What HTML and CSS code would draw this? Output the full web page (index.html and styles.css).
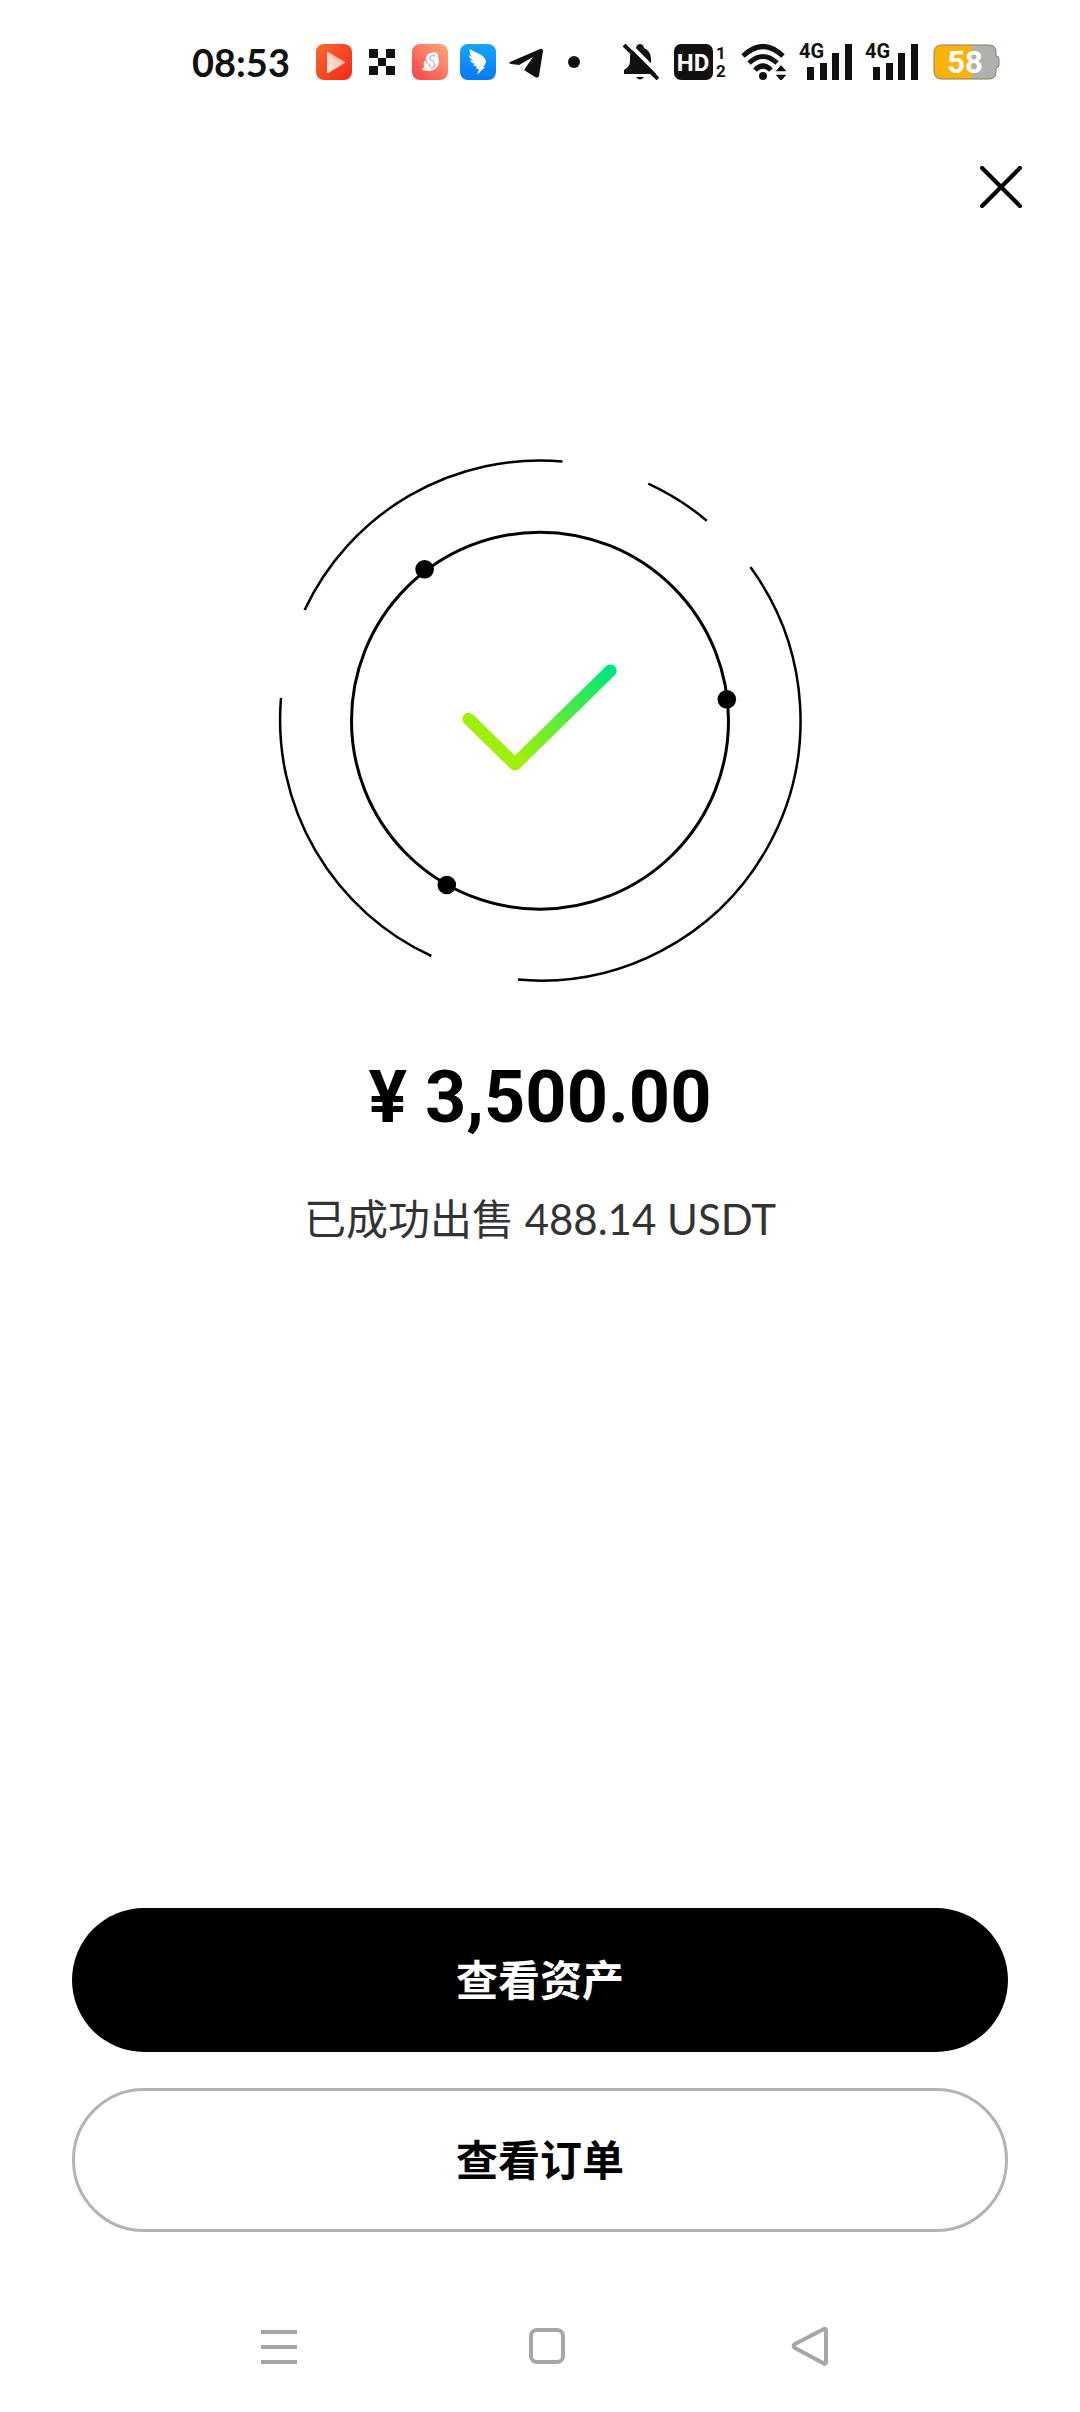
FILE: index.html
```html
<!DOCTYPE html>
<html lang="zh-CN">
<head>
<meta charset="utf-8">
<meta name="viewport" content="width=device-width, initial-scale=1">
<title>出售成功</title>
<link rel="stylesheet" href="styles.css">
</head>
<body>
<div class="screen">
  <div class="status-bar">
    <div class="status-left">
      <time class="clock">08:53</time>
      <svg class="app-icon" viewBox="0 0 36 36" aria-hidden="true">
        <defs>
          <linearGradient id="play-bg" x1="0" y1="0" x2="1" y2="1"><stop offset="0" stop-color="#f96a33"/><stop offset="1" stop-color="#f22814"/></linearGradient>
          <linearGradient id="play-fg" x1="0" y1="1" x2="1" y2="0"><stop offset="0" stop-color="#fff0ea"/><stop offset="1" stop-color="#fba893"/></linearGradient>
        </defs>
        <rect width="36" height="36" rx="8" fill="url(#play-bg)"/>
        <path d="M12 9 28 18.500 12 28Z" fill="url(#play-fg)" stroke="url(#play-fg)" stroke-width="2" stroke-linejoin="round"/>
      </svg>
      <svg class="app-icon" viewBox="0 0 36 36" aria-hidden="true">
        <path d="M5 5h9v9H5zM22 5h9v9h-9zM14 14h8v8h-8zM5 22h9v9H5zM22 22h9v9h-9z" fill="#111"/>
      </svg>
      <svg class="app-icon" viewBox="0 0 36 36" aria-hidden="true">
        <defs><linearGradient id="swan-bg" x1="1" y1="0" x2="0" y2="1"><stop offset="0" stop-color="#ffab79"/><stop offset="1" stop-color="#f93f49"/></linearGradient></defs>
        <rect width="36" height="36" rx="8" fill="url(#swan-bg)"/>
        <path d="M19 9c4-2 8 0 7 4 2 4 1 9-2 11-4 4-9 3-14 2 0-2 2-2 2-3-1-3 0-6 2-7-1-3 1-6 5-7Z" fill="#fff"/>
        <path d="M23 12c-3-1-6 0-5 3 1 2 5 3 5 6 0 2-2 3-4 3" fill="none" stroke="#8f8fd0"/>
        <path d="M14 16c0 3 4 4 4 7" fill="none" stroke="#ef7887"/>
      </svg>
      <svg class="app-icon" viewBox="0 0 36 36" aria-hidden="true">
        <defs><linearGradient id="wing-bg" x1="0" y1="0" x2="0" y2="1"><stop offset="0" stop-color="#15a5fa"/><stop offset="1" stop-color="#0879f4"/></linearGradient></defs>
        <rect width="36" height="36" rx="8" fill="url(#wing-bg)"/>
        <path d="M10 5c6 4 15 6 16 12 0 3-2 5-3 6h2l-8 8 2-6h-3l1-2-4-2 2-1c-3-1-4-2-5-4l3 1c-3-3-4-4-4-6l3 2c-2-3-3-5-2-8Z" fill="#fff"/>
      </svg>
      <svg class="app-icon" viewBox="0 0 36 36" aria-hidden="true">
        <path d="M2 18 32 5q3-1 3 2l-4 25q-1 3-4 1L16 26 25 13 11 21 3 20q-3-1-1-2Z" fill="#111"/>
      </svg>
      <svg class="app-icon" viewBox="0 0 36 36" aria-hidden="true"><circle cx="18" cy="18" r="6" fill="#111"/></svg>
    </div>
    <div class="status-right">
      <svg class="mute-icon" viewBox="0 0 36 36" aria-hidden="true">
        <path d="M13 4Q14 0 17 0T21 4Q28 7 28 15V22L34 30H1V26Q7 23 7 17V13Q7 6 13 4ZM13 33h8q-4 5-8 0Z" fill="#111"/>
        <path d="M4-2 38 32" stroke="#fff" stroke-width="4"/>
        <path d="M0 0H6L5 10H0Z" fill="#fff"/>
        <path d="M1 1 35 35" stroke="#111" stroke-width="4"/>
      </svg>
      <svg class="hd-icon" viewBox="0 0 52 36" aria-label="HD 1 2">
        <rect width="39" height="36" rx="7" fill="#111"/>
        <text class="hd-text" x="19" y="27" text-anchor="middle">HD</text>
        <text class="sim-text" x="47" y="15" text-anchor="middle">1</text>
        <text class="sim-text" x="47" y="33" text-anchor="middle">2</text>
      </svg>
      <svg class="wifi-icon" viewBox="0 0 45 36" aria-hidden="true">
        <g fill="none" stroke="#111" stroke-width="5"><path d="M2 12Q22-7 42 12"/><path d="M8 19Q22 6 36 19"/><path d="M14 26Q22 18 30 26"/></g>
        <circle cx="22" cy="32" r="4" fill="#111"/>
        <path d="M40 20 47 28H33ZM40 38 33 30H47Z" fill="#111" stroke="#fff" stroke-width="1.500"/>
      </svg>
      <svg class="signal-icon" viewBox="0 0 51 38" aria-label="4G">
        <text class="net-text" x="-2" y="15">4G</text>
        <path d="M6 24h7v13H6zM19 20h7v17h-7zM31 10h7v27h-7zM44 1h7v36h-7z" fill="#111"/>
      </svg>
      <svg class="signal-icon" viewBox="0 0 51 38" aria-label="4G">
        <text class="net-text" x="-2" y="15">4G</text>
        <path d="M6 24h7v13H6zM19 20h7v17h-7zM31 10h7v27h-7zM44 1h7v36h-7z" fill="#111"/>
      </svg>
      <svg class="battery-icon" viewBox="0 0 67 36" aria-label="58%">
        <path d="M39 1h17q7 0 7 7v4q3 0 3 3v6q0 3-3 3v4q0 7-7 7H39Z" fill="#b0b0b0"/>
        <path d="M39 1H9Q1 1 1 9v18q0 8 8 8h30Z" fill="#fcb20d"/>
        <path d="M9 1h47q7 0 7 7v4q3 0 3 3v6q0 3-3 3v4q0 7-7 7H9q-8 0-8-8V9q0-8 8-8Z" fill="none" stroke="#8b7b5b"/>
        <text class="battery-text" x="32" y="29" text-anchor="middle">58</text>
      </svg>
    </div>
  </div>

  <header class="top-bar">
    <button class="close-button" type="button" aria-label="关闭">
      <svg viewBox="0 0 40 40" aria-hidden="true"><path d="M2 2 38 38M38 2 2 38" stroke="#000" stroke-width="4" stroke-linecap="round"/></svg>
    </button>
  </header>

  <main class="result">
    <svg class="success-ring" viewBox="0 0 560 560" aria-hidden="true">
      <defs><linearGradient id="tick" gradientUnits="userSpaceOnUse" x1="258" y1="316" x2="340" y2="220"><stop offset="0" stop-color="#a0ee0c"/><stop offset="1" stop-color="#00e57d"/></linearGradient></defs>
      <g fill="none" stroke="#000" stroke-width="2.500">
        <path d="M44.600 170A260 260 0 0 1 302.500 21.400"/>
        <path d="M388.200 43.600A260 260 0 0 1 446.800 80.700"/>
        <path d="M490.400 127.100A260 260 0 0 1 257.900 539.600"/>
        <path d="M171.400 516A260 260 0 0 1 21 257.900"/>
        <circle cx="280" cy="280.700" r="188.500" stroke-width="3"/>
      </g>
      <circle cx="164.600" cy="129.300" r="9.300"/><circle cx="466.800" cy="259.300" r="9.300"/><circle cx="186.800" cy="445" r="9.300"/>
      <path d="M208.600 279 255 324.300 350.400 230.700" fill="none" stroke="url(#tick)" stroke-width="12.500" stroke-linecap="round" stroke-linejoin="round"/>
    </svg>
    <h1 class="amount">¥ 3,500.00</h1>
    <p class="summary">已成功出售 488.14 USDT</p>
  </main>

  <div class="actions">
    <button class="action action-primary" type="button">查看资产</button>
    <button class="action action-secondary" type="button">查看订单</button>
  </div>

  <nav class="system-nav" aria-label="系统导航">
    <button class="nav-button" type="button" aria-label="最近任务">
      <svg width="42" height="40" viewBox="0 0 42 40" aria-hidden="true"><path d="M0 6h36M0 21h36M0 36h36" stroke="#a6a6a6" stroke-width="4"/></svg>
    </button>
    <button class="nav-button" type="button" aria-label="主屏幕">
      <svg width="36" height="40" viewBox="0 0 36 40" aria-hidden="true"><rect x="2" y="4" width="32" height="32" rx="6" fill="none" stroke="#a6a6a6" stroke-width="4"/></svg>
    </button>
    <button class="nav-button" type="button" aria-label="返回">
      <svg width="38" height="40" viewBox="0 0 38 40" aria-hidden="true"><path d="M33 3Q35 2 35 5V36Q35 39 32 37L4 22Q1 20 4 18Z" fill="none" stroke="#a6a6a6" stroke-width="4"/></svg>
    </button>
  </nav>
</div>
</body>
</html>
```
FILE: styles.css
```css
* {
  box-sizing: border-box;
}

body {
  margin: 0;
  background: #fff;
  color: #000;
  font-family: "Noto Sans CJK SC", sans-serif;
}

button {
  padding: 0;
  border: 0;
  background: none;
  color: inherit;
  font: inherit;
}

svg {
  display: block;
  flex: none;
}

.screen {
  display: flex;
  flex-direction: column;
  min-height: 100vh;
}

.status-bar {
  display: flex;
  align-items: center;
  justify-content: space-between;
  height: 124px;
  padding: 0 80px 0 192px;
}

.status-left {
  display: flex;
  align-items: center;
  gap: 12px;
}

.clock {
  min-width: 112px;
  color: #111;
  font-family: Lato, sans-serif;
  font-size: 38px;
  font-weight: 700;
  line-height: 48px;
}

.app-icon,
.mute-icon {
  width: 36px;
  height: 36px;
}

.status-right {
  display: flex;
  align-items: center;
  gap: 15px;
}

.hd-icon {
  width: 52px;
  height: 36px;
}

.wifi-icon {
  width: 45px;
  height: 36px;
}

.signal-icon {
  width: 51px;
  height: 38px;
  overflow: visible;
}

.battery-icon {
  width: 67px;
  height: 36px;
}

.hd-text,
.sim-text,
.net-text,
.battery-text {
  fill: #111;
  font-family: Roboto, sans-serif;
  font-weight: 700;
}

.hd-text {
  fill: #fff;
  font-size: 24px;
}

.sim-text {
  font-size: 17px;
}

.net-text {
  font-size: 20px;
}

.battery-text {
  fill: #fff;
  font-size: 31px;
}

.top-bar {
  display: flex;
  align-items: center;
  justify-content: flex-end;
  height: 126px;
  padding: 0 43px;
}

.close-button {
  display: grid;
  place-items: center;
  width: 72px;
  height: 72px;
}

.close-button svg {
  width: 42px;
  height: 42px;
}

.result {
  display: flex;
  flex-direction: column;
  align-items: center;
  padding: 190px 72px 48px;
}

.success-ring {
  width: 100%;
  max-width: 560px;
}

.amount {
  margin: 50px 0 0;
  font-family: Roboto, sans-serif;
  font-size: 72px;
  font-weight: 700;
  line-height: 96px;
}

.summary {
  margin: 43px 0 0;
  color: #333;
  font-family: Lato, "Noto Sans CJK SC", sans-serif;
  font-size: 42px;
  line-height: 60px;
}

.actions {
  display: grid;
  gap: 36px;
  margin-top: auto;
  padding: 0 72px 48px;
}

.action {
  height: 144px;
  padding-bottom: 4px;
  border-radius: 72px;
  font-size: 42px;
  font-weight: 700;
  line-height: 60px;
}

.action-primary {
  background: #000;
  color: #fff;
}

.action-secondary {
  border: 3px solid #b3b3b3;
}

.system-nav {
  display: flex;
  align-items: center;
  justify-content: space-between;
  height: 132px;
  padding: 0 251px 0 261px;
}
```
